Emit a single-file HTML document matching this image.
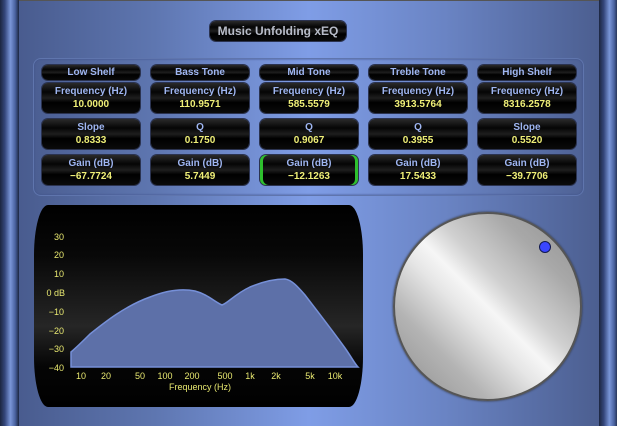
<!DOCTYPE html>
<html><head><style>
*{margin:0;padding:0;box-sizing:border-box}
body{width:617px;height:426px;overflow:hidden;position:relative;font-family:"Liberation Sans",sans-serif;
background:linear-gradient(90deg,#46588a 0%,#5e76b0 25%,#7f9de6 50%,#6a84c4 72%,#485a8a 100%);}
.top{position:absolute;left:0;top:0;width:617px;height:1px;background:#555}
.pil{position:absolute;top:0;width:19px;height:426px;background:linear-gradient(90deg,#1c2640 0%,#34467a 25%,#7a96d8 55%,#4a62a0 80%,#1c2640 100%)}
.pill{position:absolute;border-radius:6px;background:linear-gradient(#2a2a2a 0%,#050505 30%,#1e1e1e 50%,#000 65%,#0a0a0a 100%);box-shadow:0 0 0 1px #2b3350;text-align:center;font-weight:bold;}
.title{left:210px;top:21px;width:136px;height:20px;color:#b8bcc8;font-size:12px;line-height:20px}
.panel{position:absolute;left:33px;top:58px;width:551px;height:138px;border-radius:8px;border:1px solid #5f75ad;box-shadow:inset 0 0 2px #40528a;}
.hd{height:15px;font-size:10px;line-height:15px;color:#9fb6f2}
.box{height:30px;font-size:10px;color:#9fb6f2;line-height:13px;padding-top:2px}
.box b{display:block;color:#f0f078}
.green{box-shadow:inset 3px 0 0 #2ec02e,inset -3px 0 0 #2ec02e,0 0 0 1px #2b3350}
.graph{position:absolute;left:34px;top:205px;width:329px;height:202px;border-radius:14px/50px;background:linear-gradient(#000 0%,#080808 25%,#262626 60%,#050505 80%,#000 100%)}
.knob{position:absolute;left:393px;top:212px;width:189px;height:189px;border-radius:50%;border:2px solid #555;
background:linear-gradient(45deg,#8c8c8c 0%,#b4b4b4 25%,#e6e6e6 42%,#f6f6f6 50%,#d0d0d0 60%,#a8a8a8 78%,#909090 100%);box-shadow:0 0 2px #333}
.dot{position:absolute;left:539px;top:241px;width:12px;height:12px;border-radius:50%;background:#3a46ff;border:1.5px solid #101850}
</style></head><body>
<div class="top"></div>
<div class="pil" style="left:0"></div>
<div class="pil" style="left:599px"></div>
<div class="pill title">Music Unfolding xEQ</div>
<div class="panel"></div>

<div class="pill hd" style="left:42px;top:65px;width:98px">Low Shelf</div>
<div class="pill hd" style="left:151px;top:65px;width:98px">Bass Tone</div>
<div class="pill hd" style="left:260px;top:65px;width:98px">Mid Tone</div>
<div class="pill hd" style="left:369px;top:65px;width:98px">Treble Tone</div>
<div class="pill hd" style="left:478px;top:65px;width:98px">High Shelf</div>

<div class="pill box" style="left:42px;top:83px;width:98px">Frequency (Hz)<b>10.0000</b></div>
<div class="pill box" style="left:151px;top:83px;width:98px">Frequency (Hz)<b>110.9571</b></div>
<div class="pill box" style="left:260px;top:83px;width:98px">Frequency (Hz)<b>585.5579</b></div>
<div class="pill box" style="left:369px;top:83px;width:98px">Frequency (Hz)<b>3913.5764</b></div>
<div class="pill box" style="left:478px;top:83px;width:98px">Frequency (Hz)<b>8316.2578</b></div>

<div class="pill box" style="left:42px;top:119px;width:98px">Slope<b>0.8333</b></div>
<div class="pill box" style="left:151px;top:119px;width:98px">Q<b>0.1750</b></div>
<div class="pill box" style="left:260px;top:119px;width:98px">Q<b>0.9067</b></div>
<div class="pill box" style="left:369px;top:119px;width:98px">Q<b>0.3955</b></div>
<div class="pill box" style="left:478px;top:119px;width:98px">Slope<b>0.5520</b></div>

<div class="pill box" style="left:42px;top:155px;width:98px">Gain (dB)<b>−67.7724</b></div>
<div class="pill box" style="left:151px;top:155px;width:98px">Gain (dB)<b>5.7449</b></div>
<div class="pill box green" style="left:260px;top:155px;width:98px">Gain (dB)<b>−12.1263</b></div>
<div class="pill box" style="left:369px;top:155px;width:98px">Gain (dB)<b>17.5433</b></div>
<div class="pill box" style="left:478px;top:155px;width:98px">Gain (dB)<b>−39.7706</b></div>

<div class="graph"></div>
<svg style="position:absolute;left:0;top:0" width="617" height="426">
<path d="M71,352 C78,346 82,342 90,334 C105,322 125,306 150,297 C165,291 180,288 195,291 C207,294 215,302 222,305 C228,303 235,294 250,287 C262,282 275,279 285,279 C292,280 298,287 305,295 C318,312 332,330 345,348 C352,358 355,364 358,367 L71,367 Z" fill="#5d70a8" stroke="#7690d8" stroke-width="1.5"/>
<g font-family="Liberation Sans,sans-serif" font-size="9" fill="#e8e870">
<text x="64" y="240" text-anchor="end">30</text>
<text x="64" y="258" text-anchor="end">20</text>
<text x="64" y="277" text-anchor="end">10</text>
<text x="65" y="296" text-anchor="end">0 dB</text>
<text x="64" y="315" text-anchor="end">−10</text>
<text x="64" y="334" text-anchor="end">−20</text>
<text x="64" y="352" text-anchor="end">−30</text>
<text x="64" y="371" text-anchor="end">−40</text>
<g text-anchor="middle">
<text x="81" y="379">10</text><text x="106" y="379">20</text><text x="140" y="379">50</text>
<text x="165" y="379">100</text><text x="192" y="379">200</text><text x="225" y="379">500</text>
<text x="250" y="379">1k</text><text x="276" y="379">2k</text><text x="310" y="379">5k</text>
<text x="335" y="379">10k</text>
<text x="200" y="390">Frequency (Hz)</text></g>
</g>
</svg>
<div class="knob"></div>
<div class="dot"></div>
</body></html>
